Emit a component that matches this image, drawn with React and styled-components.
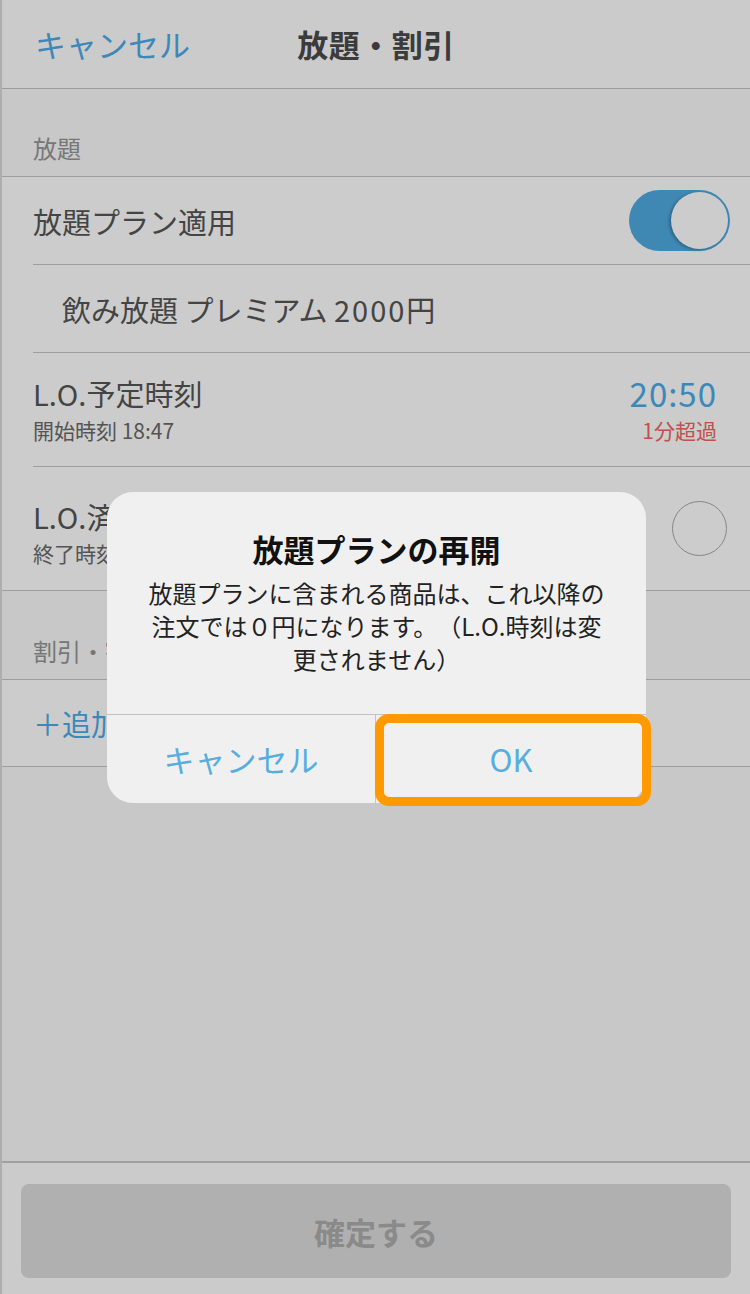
import React from "react";
import styled, { createGlobalStyle } from "styled-components";

const GlobalStyle = createGlobalStyle`
  html, body {
    margin: 0;
    padding: 0;
  }
  body {
    font-family: "Noto Sans CJK JP", "Noto Sans", sans-serif;
    background: #fafafa;
    text-spacing-trim: space-all;
  }
`;

const Page = styled.div`
  display: flex;
  flex-direction: column;
  min-height: 100vh;
  background: #fafafa;
  border-left: 2px solid #dadada;
  box-sizing: border-box;
`;

const NavBar = styled.div`
  height: 89px;
  box-sizing: border-box;
  display: grid;
  grid-template-columns: 1fr auto 1fr;
  align-items: center;
  padding: 0 33px;
  background: #fefefe;
  border-bottom: 1px solid #c4c4c4;
`;

const NavButton = styled.span`
  justify-self: start;
  font-size: 31px;
  line-height: 40px;
  color: #4caae6;
`;

const NavTitle = styled.span`
  font-size: 31px;
  line-height: 40px;
  font-weight: 700;
  color: #4a4a4a;
  letter-spacing: 0.5px;
`;

const SectionHeader = styled.div`
  height: ${(p) => p.h}px;
  box-sizing: border-box;
  display: flex;
  align-items: flex-end;
  padding: 0 0 16px 31px;
  font-size: 24px;
  line-height: 24px;
  color: #959595;
`;

const Group = styled.div`
  background: #fff;
  border-top: 1px solid #c6c6c6;
  border-bottom: 1px solid #c6c6c6;
`;

const Row = styled.div`
  height: ${(p) => p.h}px;
  margin-left: 31px;
  padding-right: ${(p) => p.pr || 33}px;
  display: flex;
  align-items: center;
  justify-content: space-between;
  border-bottom: 1px solid #c6c6c6;
  &:last-child {
    border-bottom: none;
  }
`;

const RowText = styled.span`
  font-size: 29px;
  line-height: 36px;
  color: ${(p) => (p.link ? "#4caae6" : "#555")};
  padding-left: ${(p) => p.indent || 0}px;
`;

const Num = styled.span`
  letter-spacing: 2px;
`;

const Stack = styled.div`
  display: flex;
  flex-direction: column;
  align-items: ${(p) => (p.right ? "flex-end" : "flex-start")};
  padding-top: ${(p) => p.pt || 0}px;
`;

const SubText = styled.span`
  margin-top: 5px;
  font-size: 21px;
  line-height: 28px;
  color: ${(p) => p.color || "#6a6a6a"};
`;

const TimeValue = styled.span`
  font-size: 33px;
  line-height: 36px;
  letter-spacing: 1px;
  color: #4caae6;
`;

const Toggle = styled.div`
  width: 101px;
  height: 61px;
  box-sizing: border-box;
  border-radius: 31px;
  background: #4faae2;
  display: flex;
  justify-content: flex-end;
  align-items: center;
  padding: 2px;
`;

const Knob = styled.div`
  width: 57px;
  height: 57px;
  border-radius: 50%;
  background: #fff;
  box-shadow: -2px 1px 3px rgba(0, 0, 0, 0.25);
`;

const Check = styled.div`
  width: 53px;
  height: 53px;
  border-radius: 50%;
  border: 1.5px solid #a8a8a8;
`;

const Filler = styled.div`
  flex: 1;
`;

const Footer = styled.div`
  border-top: 2px solid #c8c8c8;
  background: #fefefe;
  padding: 21px 19px 16px 19px;
`;

const ConfirmButton = styled.button`
  width: 100%;
  height: 94px;
  border: none;
  border-radius: 8px;
  background: #dcdcdc;
  font-family: inherit;
  font-size: 31px;
  font-weight: 700;
  color: #adadad;
`;

const Overlay = styled.div`
  position: fixed;
  inset: 0;
  background: rgba(0, 0, 0, 0.2);
  display: flex;
  align-items: center;
  justify-content: center;
  padding-left: 3px;
`;

const Dialog = styled.div`
  width: 539px;
  border-radius: 26px;
  background: #f0f0f0;
  text-align: center;
`;

const DialogBody = styled.div`
  padding: 37px 16px 39px;
`;

const DialogTitle = styled.div`
  font-size: 31px;
  line-height: 40px;
  font-weight: 700;
  color: #111;
`;

const DialogMessage = styled.div`
  margin-top: 7px;
  font-size: 24px;
  line-height: 33px;
  color: #222;
`;

const DialogActions = styled.div`
  display: grid;
  grid-template-columns: 269px 1fr;
  height: 88px;
  border-top: 1px solid #c2c2c2;
`;

const DialogButton = styled.button`
  position: relative;
  border: none;
  background: transparent;
  font-family: inherit;
  font-size: 31px;
  color: #56aee0;
  border-right: ${(p) => (p.divider ? "1px solid #c2c2c2" : "none")};
  border-bottom-left-radius: ${(p) => (p.divider ? "26px" : "0")};
  padding: 0;

  ${(p) =>
    p.focused &&
    `
    &::after {
      content: "";
      position: absolute;
      top: -1px;
      left: -1px;
      right: -5px;
      bottom: -3px;
      border: 9px solid #ff9900;
      border-radius: 14px;
    }
  `}
`;

export default function App() {
  return (
    <>
      <GlobalStyle />
      <Page>
        <NavBar>
          <NavButton>キャンセル</NavButton>
          <NavTitle>放題・割引</NavTitle>
        </NavBar>

        <SectionHeader h={87}>放題</SectionHeader>
        <Group>
          <Row h={87} pr={20}>
            <RowText>放題プラン適用</RowText>
            <Toggle>
              <Knob />
            </Toggle>
          </Row>
          <Row h={87}>
            <RowText indent={29}>
              飲み放題 プレミアム <Num>2000</Num>円
            </RowText>
          </Row>
          <Row h={113}>
            <Stack>
              <RowText>L.O.予定時刻</RowText>
              <SubText>開始時刻 18:47</SubText>
            </Stack>
            <Stack right>
              <TimeValue>20:50</TimeValue>
              <SubText color="#f06460">1分超過</SubText>
            </Stack>
          </Row>
          <Row h={123} pr={23}>
            <Stack pt={8}>
              <RowText>L.O.済み</RowText>
              <SubText>終了時刻 --:--</SubText>
            </Stack>
            <Check />
          </Row>
        </Group>

        <SectionHeader h={88}>割引・割増</SectionHeader>
        <Group>
          <Row h={86}>
            <RowText link>＋追加</RowText>
          </Row>
        </Group>

        <Filler />

        <Footer>
          <ConfirmButton>確定する</ConfirmButton>
        </Footer>
      </Page>

      <Overlay>
        <Dialog>
          <DialogBody>
            <DialogTitle>放題プランの再開</DialogTitle>
            <DialogMessage>
              放題プランに含まれる商品は、これ以降の
              <br />
              注文では０円になります。（L.O.時刻は変
              <br />
              更されません）
            </DialogMessage>
          </DialogBody>
          <DialogActions>
            <DialogButton divider>キャンセル</DialogButton>
            <DialogButton focused>OK</DialogButton>
          </DialogActions>
        </Dialog>
      </Overlay>
    </>
  );
}
